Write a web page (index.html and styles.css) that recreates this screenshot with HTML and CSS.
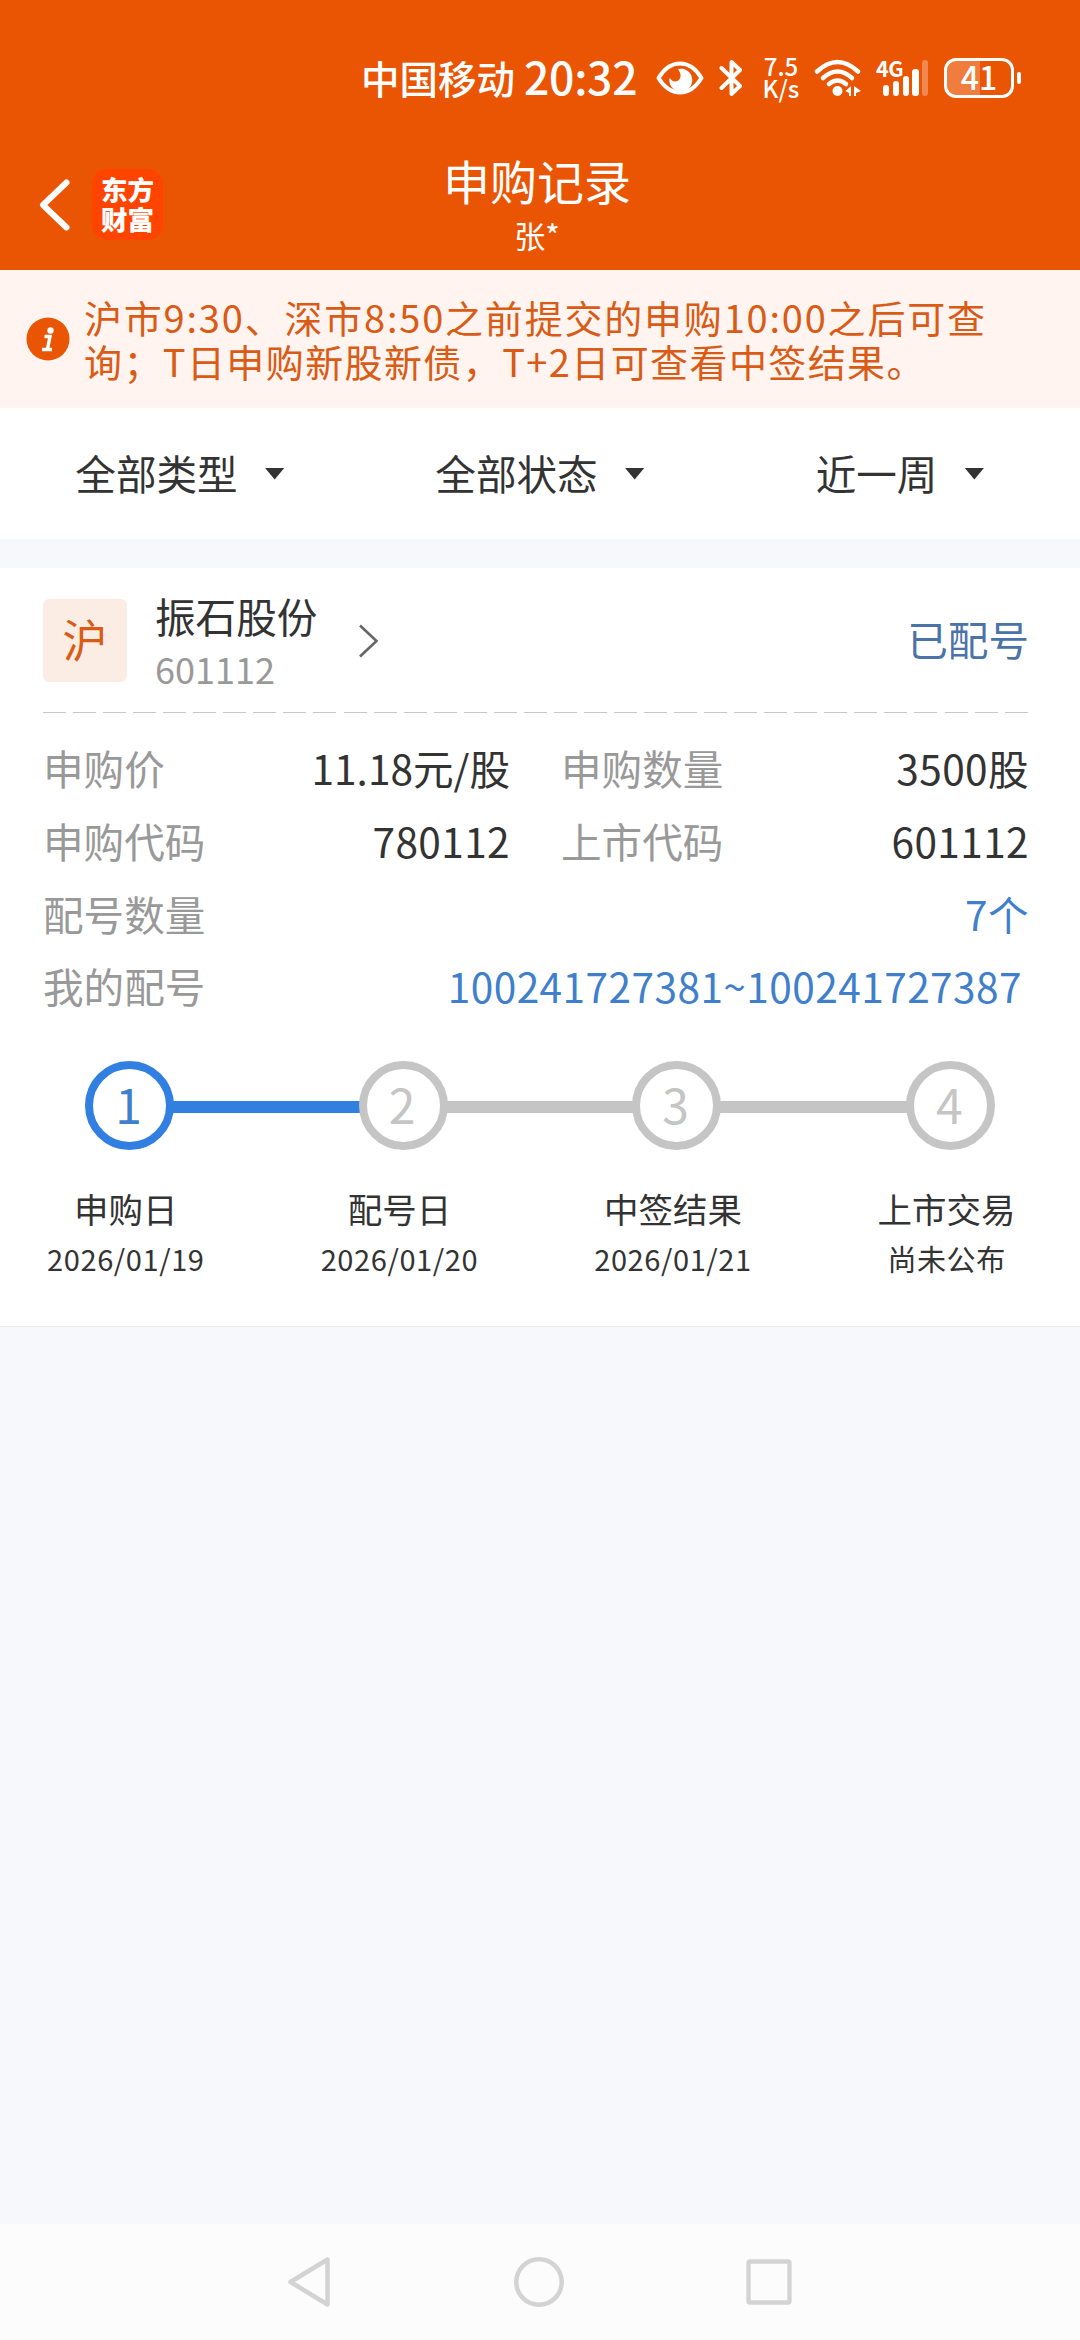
FILE: index.html
```html
<!DOCTYPE html>
<html lang="zh-CN">
<head>
    <meta charset="UTF-8">
    <meta name="viewport" content="width=device-width, initial-scale=1.0">
    <title>申购记录</title>
    <link rel="stylesheet" href="styles.css">
</head>
<body>
    <div class="status-bar">
        <span class="carrier">中国移动</span>
        <span class="clock">20:32</span>
        <svg class="icon-eye" width="48" height="34" viewBox="0 0 48 34">
            <path d="M2.500 17C8 8 15.500 2.500 24 2.500S40 8 45.500 17C40 26 32.500 31.500 24 31.500S8 26 2.500 17Z" fill="none" stroke="#fff" stroke-width="4" stroke-linejoin="round"/>
            <path d="M22 8A11.500 11.500 0 1 1 13.500 17Q17 21.500 21.500 20Q27.500 16 22 8Z" fill="#fff"/>
        </svg>
        <svg class="icon-bt" width="24" height="38" viewBox="0 0 24 38">
            <path d="M2.500 9L21 27L12.500 35V23M2.500 29L21 11L12.500 3V15" fill="none" stroke="#fff" stroke-width="4" stroke-linecap="round" stroke-linejoin="round"/>
        </svg>
        <div class="speed"><span>7.5</span><span>K/s</span></div>
        <svg class="icon-wifi" width="48" height="38" viewBox="0 0 48 38">
            <g fill="none" stroke="#fff" stroke-width="4.500" stroke-linecap="round">
                <path d="M3 12.500Q23.500 -6.500 44 12.500"/>
                <path d="M9 19Q23.500 6 38 19"/>
                <path d="M15 25Q23.500 18 32 25"/>
            </g>
            <circle cx="23.500" cy="32" r="5" fill="#fff"/>
            <path d="M37 27V37H35V34L31.500 32ZM40 27L47 32L42 34V37H40Z" fill="#fff"/>
        </svg>
        <div class="signal">
            <span class="signal-type">4G</span>
            <i class="b1"></i><i class="b2"></i><i class="b3"></i><i class="b4"></i><i class="b5"></i>
        </div>
        <div class="battery"><span>41</span></div>
        <div class="battery-cap"></div>
    </div>

    <header class="header">
        <div class="header-left">
            <svg width="34" height="56" viewBox="0 0 34 56">
                <path d="M28.500 5.500L5 28L28.500 50.500" fill="none" stroke="#fff" stroke-width="6" stroke-linecap="round" stroke-linejoin="round"/>
            </svg>
            <div class="logo">东方<br>财富</div>
        </div>
        <div class="header-title">
            <h1>申购记录</h1>
            <p>张*</p>
        </div>
    </header>

    <div class="notice">
        <svg width="44" height="44" viewBox="0 0 44 44">
            <circle cx="22" cy="22" r="21.500" fill="#ea5504"/>
            <circle cx="24.500" cy="13.500" r="3.200" fill="#fff"/>
            <path d="M18.500 19.500H24L21.500 32M16 32.500H26" fill="none" stroke="#fff" stroke-width="3.400"/>
        </svg>
        <p>沪市9:30、深市8:50之前提交的申购10:00之后可查<br><span class="tight">询；T日申购新股新债，T+2日可查看中签结果。</span></p>
    </div>

    <div class="filters">
        <div class="filter">全部类型<i class="caret"></i></div>
        <div class="filter">全部状态<i class="caret"></i></div>
        <div class="filter">近一周<i class="caret"></i></div>
    </div>

    <section class="card">
        <div class="card-head">
            <div class="market">沪</div>
            <div class="stock">
                <div class="stock-name">振石股份</div>
                <div class="stock-code">601112</div>
            </div>
            <svg width="22" height="36" viewBox="0 0 22 36">
                <path d="M2 2.500L18.500 18L2 33.500" fill="none" stroke="#666" stroke-width="2.600"/>
            </svg>
            <div class="state">已配号</div>
        </div>
        <div class="divider"></div>

        <div class="details">
            <div class="item"><span class="label">申购价</span><span class="value price">11.18元/股</span></div>
            <div class="item"><span class="label">申购数量</span><span class="value">3500股</span></div>
            <div class="item"><span class="label">申购代码</span><span class="value">780112</span></div>
            <div class="item"><span class="label">上市代码</span><span class="value">601112</span></div>
            <div class="item wide"><span class="label">配号数量</span><span class="value link">7个</span></div>
            <div class="item wide"><span class="label">我的配号</span><span class="value link numbers">100241727381~100241727387</span></div>
        </div>

        <div class="steps">
            <div class="step done">
                <div class="dot">1</div>
                <div class="step-name">申购日</div>
                <div class="step-date">2026/01/19</div>
            </div>
            <div class="step">
                <div class="dot">2</div>
                <div class="step-name">配号日</div>
                <div class="step-date">2026/01/20</div>
            </div>
            <div class="step">
                <div class="dot">3</div>
                <div class="step-name">中签结果</div>
                <div class="step-date">2026/01/21</div>
            </div>
            <div class="step">
                <div class="dot">4</div>
                <div class="step-name">上市交易</div>
                <div class="step-date">尚未公布</div>
            </div>
        </div>
    </section>

    <nav class="nav-bar">
        <svg width="46" height="54" viewBox="0 0 46 54">
            <path d="M41.500 4.500V49.500L4.500 27Z" fill="none" stroke="#d3d3d3" stroke-width="4.500" stroke-linejoin="round"/>
        </svg>
        <svg width="52" height="52" viewBox="0 0 52 52">
            <circle cx="26" cy="26" r="22.700" fill="none" stroke="#d3d3d3" stroke-width="4.500"/>
        </svg>
        <svg width="46" height="46" viewBox="0 0 46 46">
            <rect x="2.500" y="2.500" width="41" height="41" rx="1.500" fill="none" stroke="#d3d3d3" stroke-width="4.300"/>
        </svg>
    </nav>
</body>
</html>
```

FILE: styles.css
```css
* { box-sizing: border-box; margin: 0; padding: 0; }
body { display: flex; flex-direction: column; width: 1080px; height: 2340px; background: #f7f8fb; color: #333; font-family: "Noto Sans CJK SC", sans-serif; font-size: 40.6px; overflow: hidden; }
svg { display: block; flex: none; }
i { display: block; }

/* status bar */
.status-bar { display: flex; align-items: center; height: 156px; padding-left: 361px; background: #ea5504; color: #fff; white-space: nowrap; }
.carrier { width: 163px; font-size: 38.5px; font-weight: 500; line-height: 40px; margin-top: -3px; }
.clock { width: 132px; font-size: 44.5px; font-weight: 500; line-height: 46px; letter-spacing: -0.300px; margin-top: -5px; }
.icon-bt { margin-left: 15px; }
.speed { width: 40px; margin-left: 18px; font-size: 24px; font-weight: 500; line-height: 22px; text-align: center; margin-top: -3px; }
.speed span { display: block; }
.icon-wifi { margin-left: 13px; }
.signal { position: relative; display: flex; align-items: flex-end; gap: 3.500px; width: 54px; height: 36px; margin-left: 14px; padding-left: 7px; }
.signal i { width: 6.300px; border-radius: 3px; background: #fff; flex: none; }
.signal .b1 { height: 11px; }
.signal .b2 { height: 15px; }
.signal .b3 { height: 20px; }
.signal .b4 { height: 27px; }
.signal .b5 { height: 36px; opacity: 0.3; }
.signal-type { position: absolute; left: 0; top: -3px; font-size: 21.5px; font-weight: 700; line-height: 22px; letter-spacing: -0.500px; }
.battery { width: 70px; height: 40px; margin-left: 14px; border: 3px solid #fff; border-radius: 12px; background: linear-gradient(90deg, #f07c3e 33px, transparent 33px); font-size: 32px; font-weight: 500; line-height: 30px; text-align: center; }
.battery-cap { width: 4px; height: 12px; margin-left: 3px; border-radius: 2px; background: #fff; }

/* header */
.header { display: grid; grid-template-columns: 240px 594px 246px; height: 114px; background: #ea5504; color: #fff; }
.header-left { display: flex; align-items: flex-start; padding: 13px 0 0 38px; }
.header-left svg { margin-top: 8px; }
.logo { width: 71px; height: 71px; margin-left: 20px; padding-top: 5px; border-radius: 15px; background: #ff4400; font-size: 26.5px; font-weight: 900; line-height: 30px; text-align: center; }
.header-title { text-align: center; }
.header-title h1 { font-size: 47px; font-weight: 400; line-height: 47px; }
.header-title p { margin-top: 12px; font-size: 31px; line-height: 40px; }

/* notice */
.notice { display: flex; height: 138px; padding: 25px 0 0 26px; background: #fff4ef; color: #d95b16; }
.notice svg { margin-top: 22px; }
.notice p { margin-left: 14px; font-size: 38px; line-height: 44px; letter-spacing: 1.800px; white-space: nowrap; }
.notice .tight { letter-spacing: 1.400px; }

/* filters */
.filters { display: flex; height: 131px; background: #fff; }
.filter { display: flex; align-items: center; justify-content: center; flex: 1; padding-bottom: 3px; }
.caret { width: 20px; height: 12px; margin: 3px 0 0 27px; background: #333; clip-path: polygon(0 0, 100% 0, 50% 100%); }

/* card */
.card { height: 759px; margin-top: 29px; border-bottom: 1px solid #ebebeb; background: #fff; }
.card-head { display: flex; align-items: center; height: 144px; padding: 0 51px 0 43px; }
.market { width: 84px; height: 83px; border-radius: 6px; background: #fcede4; color: #d95b16; font-size: 45px; line-height: 79px; text-align: center; }
.stock { width: 203px; margin-left: 28px; line-height: 52px; padding-top: 3px; }
.stock-code { color: #999; font-size: 36px; }
.card-head svg { margin: 2px 0 0 0; }
.state { margin: -4px 0 0 auto; color: #4a74a8; }
.divider { height: 1px; margin: 0 51px 0 43px; background: repeating-linear-gradient(90deg, #c8c8c8 0 23px, transparent 23px 30.050px); }

.details { display: grid; grid-template-columns: 467px 468px; grid-auto-rows: 72.700px; column-gap: 51px; padding: 19px 0 0 43px; }
.item { display: flex; align-items: center; justify-content: space-between; line-height: 60px; }
.wide { grid-column: span 2; }
.label { color: #999; }
.value { letter-spacing: 0.400px; }
.price { letter-spacing: 0; }
.link { color: #3f7fcc; }
.numbers { margin-right: 7px; letter-spacing: 0.450px; }

/* progress */
.steps { display: flex; margin: 38px 0 0 -11px; }
.step { position: relative; width: 273.600px; flex: none; text-align: center; white-space: nowrap; }
.dot { position: relative; width: 89px; height: 89px; margin-left: 96px; border: 8.500px solid #c5c5c5; border-radius: 50%; background: #fff; color: #c5c5c5; font-size: 48px; line-height: 68px; text-indent: -2px; }
/* line to the next step */
.step:not(:last-child)::before { content: ""; position: absolute; left: 180px; top: 40px; width: 195px; height: 12px; background: #c5c5c5; }
.done .dot { border-color: #327fe2; color: #3f7fcc; }
.step.done::before { background: #327fe2; }
.step-name { margin-top: 38px; font-size: 34.500px; line-height: 40px; }
.step-date { margin-top: 10px; font-size: 29px; line-height: 40px; letter-spacing: 0.600px; }

/* system navigation */
.nav-bar { display: flex; align-items: center; justify-content: space-between; height: 116px; margin-top: auto; padding: 0 288px 0 286px; background: #fcfcfc; }
```
